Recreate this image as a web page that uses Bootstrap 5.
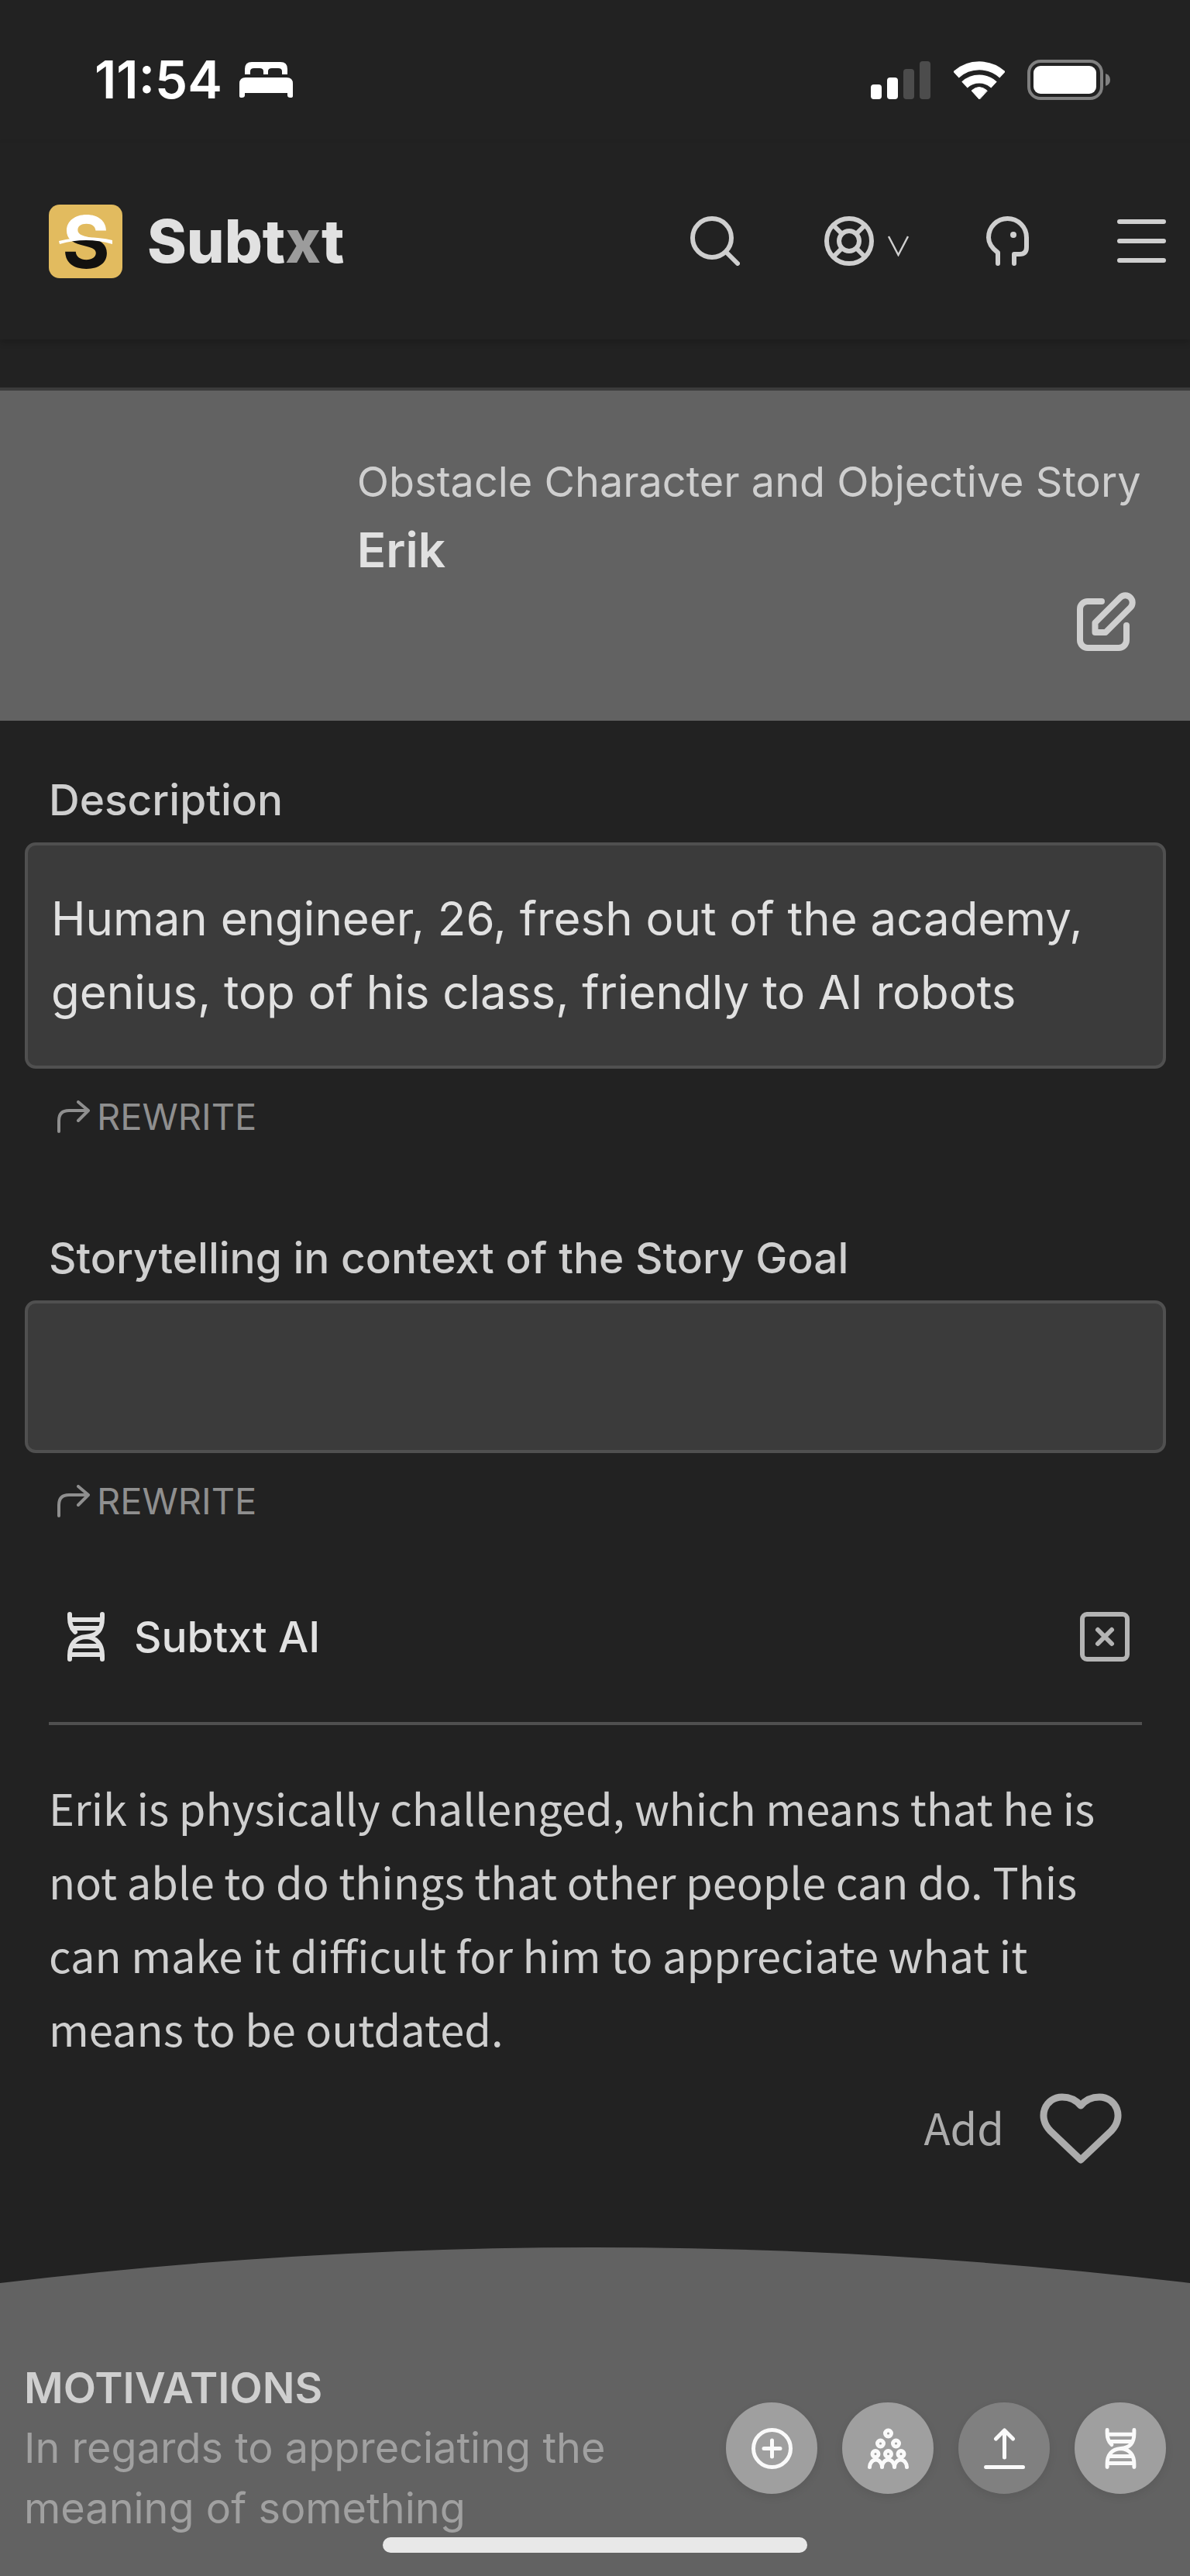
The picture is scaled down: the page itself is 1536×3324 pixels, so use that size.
<!DOCTYPE html>
<html lang="en">
<head>
<meta charset="utf-8">
<meta name="viewport" content="width=device-width, initial-scale=1">
<title>Subtxt – Erik</title>
<link rel="stylesheet" href="https://cdn.jsdelivr.net/npm/bootstrap@5.3.0/dist/css/bootstrap.min.css">
<style>
  body { background: #222; color: #cfcfcf; font-family: Inter, "Liberation Sans", sans-serif; font-size: 54px; line-height: 84px; }
  svg { display: block; flex: none; fill: none; stroke: currentColor; stroke-linecap: round; stroke-linejoin: round; }
  button.bare { background: none; border: 0; padding: 0; color: inherit; font: inherit; display: flex; align-items: center; }

  .status-row { height: 184px; padding: 22px 102px 0 122px; color: #fff; }
  .status-row svg { stroke: none; fill: currentColor; }
  .status-left { gap: 22px; }
  .status-right { gap: 29px; }
  .clock { font-size: 67px; font-weight: 600; }

  .top-nav { height: 254px; padding: 0 31px 0 63px; box-shadow: 0 4px 8px rgba(0, 0, 0, .18); }
  .brand-link { color: #e1e1e1; font-size: 77px; font-weight: 800; gap: 32px; }
  .brand-link span span { color: #9c9c9c; }
  .nav-tools { gap: 95px; }
  .nav-tools .wide { margin-right: 14px; }
  .nav-tools svg { stroke-width: 6; }
  .help-toggle { gap: 18px; }

  .hero { margin-top: 62px; border-top: 4px solid #3c3c3c; background: #626262; padding: 76px 62px 90px 30%; }
  .hero h1 { font-size: 62px; line-height: 92px; font-weight: 600; color: #e1e1e1; }
  .hero button { margin: 8px 8px 0 auto; }

  .fields { padding: 60px 31px 0 32px; }
  .field-block { margin-bottom: 110px; }
  .field-block label { font-size: 55px; font-weight: 500; padding-left: 31px; margin-bottom: 13px; display: block; }
  .field-block .form-control { background: #3b3b3b; border: 4px solid #505050; border-radius: 14px; color: #e1e1e1; font-size: 60px; line-height: 95px; padding: 47px 30px; resize: none; overflow: hidden; min-height: 0; display: block; }
  button.rewrite { margin: 32px 0 0 42px; height: 60px; color: #8f8f8f; font-size: 47px; gap: 9px; }

  .ai-panel { padding: 0 62px 0 63px; margin-top: 113px; }
  .ai-head { padding: 0 16px 78px; border-bottom: 4px solid #505050; height: 146px; }
  .ai-head h2 { font-size: 55px; line-height: 64px; font-weight: 500; color: #e1e1e1; gap: 30px; }
  .ai-copy, button.add-row { font-family: "Noto Sans CJK SC", "Noto Sans", sans-serif; font-size: 56px; line-height: 95px; }
  .ai-copy { margin: 58px 0 37px; }
  button.add-row { color: #acacac; gap: 46px; height: 92px; margin: 0 26px 107px auto; }
  .add-row span { padding-bottom: 8px; }

  .dock-curve { width: 100%; height: 46px; fill: #626262; stroke: none; }
  .dock { background: #626262; padding: 96px 31px 48px 31px; gap: 32px; line-height: 78px; }
  .dock h2 { font-size: 55px; line-height: 78px; font-weight: 600; color: #cfcfcf; }
  .dock p { color: #a0a0a0; }
  .round-btn { width: 118px; height: 118px; border-radius: 50%; border: 0; padding: 0; background: #9f9f9f; color: #fafafa; display: flex; align-items: center; justify-content: center; box-shadow: 0 4px 12px rgba(0, 0, 0, .08); }
  .round-btn.dim { background: #808080; }
  .round-btn svg { width: 53px; height: 53px; }
  .home-bar { width: 548px; height: 20px; border-radius: 10px; background: #e8e8e8; bottom: 30px; left: 50%; transform: translateX(-50%); }
</style>
</head>
<body>
<svg class="d-none" aria-hidden="true">
  <symbol id="dna" viewBox="0 0 64 64">
    <path d="M11 3V8C11 16 13 21 18 26M53 3V8C53 24 46 31 32 32C18 33 11 42 11 56V61M53 61V56C53 42 46 33 32 32M12 10H52M14 21H50M14 44H50M12 55H52"/>
  </symbol>
  <symbol id="turn" viewBox="0 0 42 42">
    <path d="M2 40V26Q2 13 15 13H39M27 2L40 13L27 26"/>
  </symbol>
</svg>

<div class="min-vh-100 d-flex flex-column position-relative">
  <div class="status-row d-flex align-items-center justify-content-between">
    <div class="status-left d-flex align-items-center">
      <span class="clock">11:54</span>
      <svg width="69" height="46" viewBox="0 0 69 46"><path d="M7 16V9Q7 0 16 0H53Q62 0 62 9V16H55V12Q55 8 50 8H42Q37 8 37 12V16H31V12Q31 8 26 8H19Q14 8 14 12V16Z"/><path d="M0 44V28Q0 20 8 20H61Q69 20 69 28V44Q69 46 66 46Q62 46 62 43V40H7V43Q7 46 3 46Q0 46 0 44Z"/></svg>
    </div>
    <div class="status-right d-flex align-items-center">
      <svg width="78" height="50" viewBox="0 0 78 50"><rect y="31" width="14" height="19" rx="4"/><rect x="21" y="22" width="14" height="28" rx="4"/><g fill="#4c4c4c"><rect x="42" y="11" width="14" height="39" rx="4"/><rect x="63" y="1" width="14" height="49" rx="4"/></g></svg>
      <svg width="66" height="50" viewBox="0 0 66 50"><g fill="none" stroke="#fff" stroke-width="11" stroke-linecap="butt"><path d="M3 18.500A44.500 44.500 0 0 1 63 18.500"/><path d="M14 31.500A28 28 0 0 1 52 31.500"/></g><path d="M33 50L23 39Q33 30 43 39Z" stroke="#fff" stroke-width="1"/></svg>
      <svg width="108" height="52" viewBox="0 0 108 52"><rect x="2" y="2" width="94" height="48" rx="15" fill="none" stroke="#808080" stroke-width="4"/><rect x="8" y="8" width="81" height="36" rx="9"/><path d="M101 18Q107 20 107 26T101 34Z" fill="#808080"/></svg>
    </div>
  </div>

  <nav class="top-nav d-flex align-items-center justify-content-between">
    <a href="#" class="brand-link d-flex align-items-center text-decoration-none">
      <svg width="95" height="95" viewBox="0 0 95 95">
        <radialGradient id="horizon" gradientUnits="userSpaceOnUse" cx="48" cy="166" r="121">
          <stop offset=".995" stop-color="#12110f"/>
          <stop offset="1" stop-color="#fff"/>
        </radialGradient>
        <rect width="95" height="95" rx="14" fill="#e2bb5f" stroke="none"/>
        <text x="48" y="82" font-family="Inter, sans-serif" font-weight="700" font-size="94" text-anchor="middle" stroke="none" fill="url(#horizon)">S</text>
        <path d="M13 47Q48 38 82 46V51Q48 41 14 51Z" fill="#fff" stroke="none"/>
      </svg>
      <span>Subt<span>x</span>t</span>
    </a>
    <div class="nav-tools d-flex align-items-center">
      <button class="bare wide" type="button" aria-label="Search"><svg width="64" height="64" viewBox="0 0 64 64"><circle cx="28" cy="28" r="25"/><path d="M46 46L61 61"/></svg></button>
      <button class="bare help-toggle" type="button" aria-label="Help menu"><svg width="64" height="64" viewBox="0 0 64 64"><circle cx="32" cy="32" r="29"/><circle cx="32" cy="32" r="13"/><path d="M12 12L22 22M52 12L42 22M12 52L22 42M52 52L42 42"/></svg><svg width="27" height="40" viewBox="0 0 27 40"><path d="M1 14L13.500 38L26 14" stroke-width="2.400" stroke-linecap="butt" stroke-linejoin="miter"/></svg></button>
      <button class="bare wide" type="button" aria-label="Character"><svg width="64" height="64" viewBox="0 0 64 64"><path d="M20 61V47C12 41 8 35 8 27.500A24.500 24.500 0 0 1 57 27.500V40Q57 49 48 49H41V61"/><circle cx="40" cy="24" r="4" fill="currentColor" stroke="none"/></svg></button>
      <button class="bare" type="button" aria-label="Menu"><svg width="64" height="64" viewBox="0 0 64 64"><path d="M4 7H61M4 32H61M4 57H61"/></svg></button>
    </div>
  </nav>

  <header class="hero">
    <div>Obstacle Character and Objective Story</div>
    <h1 class="mb-0">Erik</h1>
    <button class="bare" type="button" aria-label="Edit"><svg width="76" height="76" viewBox="0 0 76 76" stroke-width="8"><path d="M32 12H14A10 10 0 0 0 4 22V62A10 10 0 0 0 14 72H54A10 10 0 0 0 64 62V43"/><path d="M23.500 52V39.500L56 7A9 9 0 0 1 69 20L37 52Z"/></svg></button>
  </header>

  <main>
    <form class="fields">
      <div class="field-block">
        <label for="desc">Description</label>
        <textarea class="form-control" id="desc" rows="2">Human engineer, 26, fresh out of the academy, genius, top of his class, friendly to AI robots</textarea>
        <button class="bare rewrite" type="button"><svg width="42" height="42" stroke-width="4"><use href="#turn"/></svg>REWRITE</button>
      </div>
      <div class="field-block">
        <label for="goal">Storytelling in context of the Story Goal</label>
        <textarea class="form-control" id="goal" rows="1"></textarea>
        <button class="bare rewrite" type="button"><svg width="42" height="42" stroke-width="4"><use href="#turn"/></svg>REWRITE</button>
      </div>
    </form>

    <section class="ai-panel">
      <div class="ai-head d-flex align-items-center justify-content-between">
        <h2 class="d-flex align-items-center mb-0"><svg width="64" height="64" stroke-width="6"><use href="#dna"/></svg>Subtxt AI</h2>
        <button class="bare" type="button" aria-label="Close"><svg width="64" height="64" viewBox="0 0 64 64" stroke-width="6" color="#b4b4b4"><rect x="3" y="3" width="58" height="58" rx="6"/><path d="M23 23L41 41M41 23L23 41"/></svg></button>
      </div>
      <p class="ai-copy">Erik is physically challenged, which means that he is not able to do things that other people can do. This can make it difficult for him to appreciate what it means to be outdated.</p>
      <button class="bare add-row" type="button"><span>Add</span><svg width="106" height="92" viewBox="0 0 106 92" stroke-width="9" stroke-linejoin="miter"><path d="M53 86L14 49C-4 31 7 5 29 5C40 5 47 9 53 16C59 9 66 5 77 5C99 5 110 31 92 49Z"/></svg></button>
    </section>
  </main>

  <footer class="mt-auto">
    <svg class="dock-curve" viewBox="0 0 1536 46" preserveAspectRatio="none"><path d="M0 46Q768 -46 1536 46Z"/></svg>
    <div class="dock d-flex align-items-center">
      <div class="flex-grow-1">
        <h2 class="mb-0">MOTIVATIONS</h2>
        <p class="mb-0">In regards to appreciating the meaning of something</p>
      </div>
      <button class="round-btn flex-shrink-0" type="button" aria-label="Add item"><svg viewBox="0 0 53 53" stroke-width="5"><circle cx="26.500" cy="26.500" r="24"/><path d="M26.500 16V37M16 26.500H37"/></svg></button>
      <button class="round-btn flex-shrink-0" type="button" aria-label="Characters"><svg viewBox="0 0 53 53" stroke-width="5"><circle cx="26.500" cy="7" r="4"/><circle cx="16.500" cy="20" r="4"/><circle cx="36.500" cy="20" r="4"/><circle cx="10" cy="33.500" r="4"/><circle cx="26.500" cy="33.500" r="4"/><circle cx="43" cy="33.500" r="4"/><path d="M2.500 50.500A8 9.500 0 0 1 18.500 50.500A8 9.500 0 0 1 34.500 50.500A8 9.500 0 0 1 50.500 50.500"/></svg></button>
      <button class="round-btn dim flex-shrink-0" type="button" aria-label="Upload"><svg viewBox="0 0 53 53" stroke-width="5"><path d="M26.500 38V3M15.500 14L26.500 3L37.500 14M2.500 50.500H50.500"/></svg></button>
      <button class="round-btn flex-shrink-0" type="button" aria-label="Subtxt AI"><svg stroke-width="6"><use href="#dna"/></svg></button>
    </div>
  </footer>
  <div class="home-bar position-absolute"></div>
</div>
<script src="https://cdn.jsdelivr.net/npm/bootstrap@5.3.0/dist/js/bootstrap.bundle.min.js"></script>
</body>
</html>
